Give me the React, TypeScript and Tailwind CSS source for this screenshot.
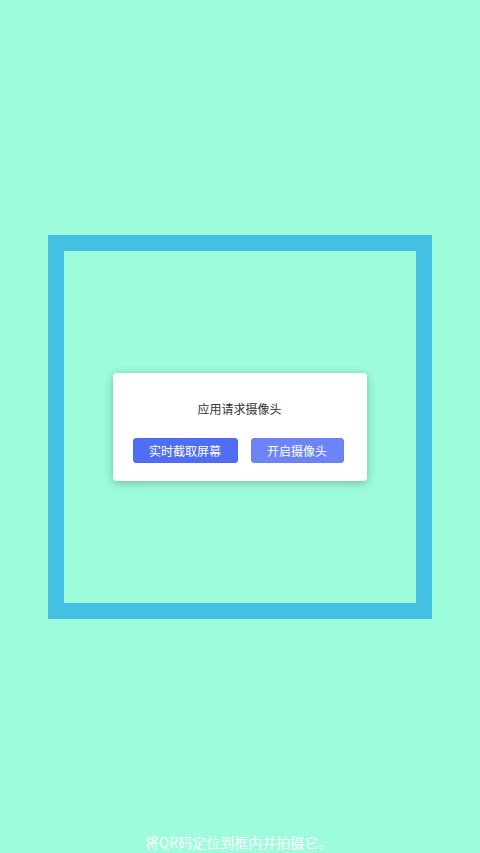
export default function App() {
  return (
    <div
      className="relative flex h-[853px] w-full items-center justify-center overflow-hidden bg-[#9dfcdc]"
      style={{ fontFamily: '"Noto Sans CJK SC", "Noto Sans", sans-serif' }}
    >
      {/* scan frame */}
      <div className="flex h-[384px] w-[384px] items-center justify-center border-[16px] border-[#44c1e2]">
        {/* permission dialog */}
        <div className="mr-[1px] flex h-[108px] w-[254px] flex-col items-center rounded-[4px] bg-white shadow-[0_2px_10px_rgba(0,0,0,0.25)]">
          <div className="mt-[28px] text-[12px] leading-[16px] text-[#333]">应用请求摄像头</div>
          <div className="mt-[21px] flex gap-[13px] pr-[3px]">
            <button className="h-[25px] w-[105px] rounded-[3px] border border-[#4a6af0] bg-[#4f6ef5] text-[12px] leading-[23px] text-white">
              实时截取屏幕
            </button>
            <button className="h-[25px] w-[93px] rounded-[3px] border border-[#6880f2] bg-[#6c84f7] text-[12px] leading-[23px] text-white">
              开启摄像头
            </button>
          </div>
        </div>
      </div>
      <div className="absolute bottom-[1px] left-0 right-0 pr-[3px] text-center text-[14px] leading-[20px] text-white">
        将QR码定位到框内并拍摄它。
      </div>
    </div>
  );
}
